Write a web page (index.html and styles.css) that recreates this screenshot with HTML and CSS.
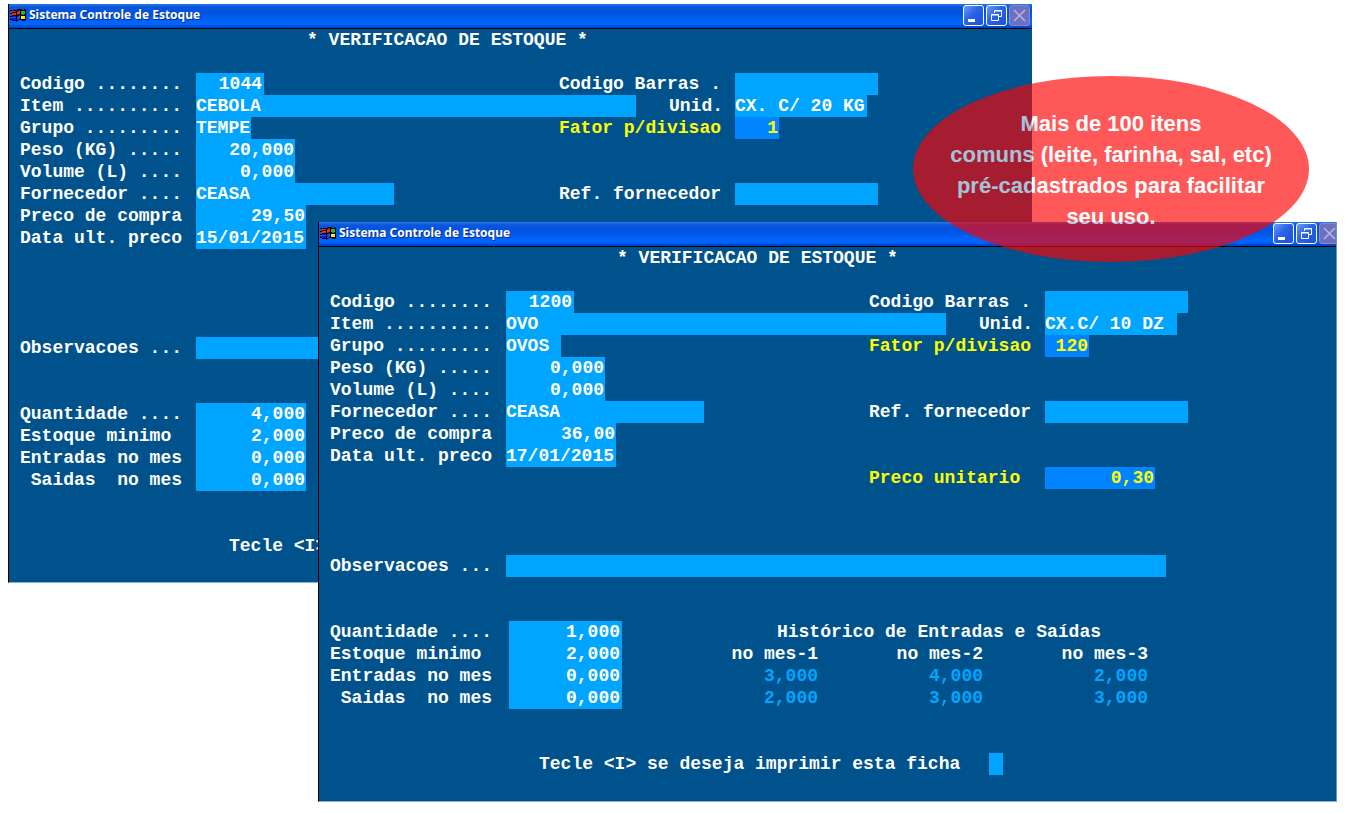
FILE: index.html
```html
<!DOCTYPE html>
<html lang="pt-BR">
<head>
<meta charset="utf-8">
<title>Sistema Controle de Estoque</title>
<link rel="stylesheet" href="styles.css">
</head>
<body>
<svg class="defs" aria-hidden="true">
  <symbol id="flag" viewBox="0 0 17 15">
    <path d="M7 3 9 1 12 1 14 2 17 1V12L15 13 12 12 10 12 7 14z" fill="#000"/>
    <path d="M1 2h2v1H1zM4 2h3v1H4zM1 5h2v1H1zM3 4h4v1H3zM1 8h2v1H1zM3 7h4v1H3zM1 11h2v1H1zM3 12h4v1H3z" fill="#000"/>
    <path d="M1 4h2v1H1zM3 3h4v1H3zM2 6h5v1H2zM3 5h4v1H3z" fill="#f02818"/>
    <path d="M1 10h2v1H1zM3 8h4v1H3zM3 10h4v2H3z" fill="#1018e0"/>
    <path d="M9 3 11 2V6L8 7V4z" fill="#f02818"/>
    <path d="M12 3 14 3 16 3V6L14 7 12 6z" fill="#20c020"/>
    <path d="M8 9 11 7V11L8 12z" fill="#2050ff"/>
    <path d="M12 8 14 8 16 8V11L14 11 12 11z" fill="#ffe820"/>
  </symbol>
  <symbol id="min" viewBox="0 0 21 21"><path d="M5 14h7v3H5z" fill="#fff"/></symbol>
  <symbol id="restore" viewBox="0 0 21 21">
    <path d="M8.500 8V5.500H15.500V11.500H13M8 6h8" fill="none" stroke="#fff"/>
    <path d="M5.500 9.500h7v6h-7zM5 10h8" fill="none" stroke="#fff"/>
  </symbol>
  <symbol id="close" viewBox="0 0 21 21"><path d="M5 5 16 16M16 5 5 16" fill="none" stroke="#b9b6dc" stroke-width="1.500"/></symbol>
</svg>
<main class="desktop">
  <section class="window window-back">
    <header class="titlebar">
      <svg class="app-icon"><use href="#flag"/></svg>
      <h2 class="caption">Sistema Controle de Estoque</h2>
      <button class="tb" aria-label="Minimizar"><svg><use href="#min"/></svg></button>
      <button class="tb" aria-label="Restaurar"><svg><use href="#restore"/></svg></button>
      <button class="tb tb-off" aria-label="Fechar" disabled><svg><use href="#close"/></svg></button>
    </header>
    <form class="screen">
      <h1 class="heading">* VERIFICACAO DE ESTOQUE *</h1>
      <div class="block">
        <div class="row"><label for="a1">Codigo ........</label><input id="a1" class="w6 num" value="1044"><label for="a2">Codigo Barras .</label><input id="a2" class="w13"></div>
        <div class="row"><label for="a3">Item ..........</label><input id="a3" class="w40" value="CEBOLA"><label for="a4" class="end">Unid.</label><input id="a4" class="w12" value="CX. C/ 20 KG"></div>
        <div class="row"><label for="a5">Grupo .........</label><input id="a5" class="w5" value="TEMPE"><label for="a6" class="calc">Fator p/divisao</label><input id="a6" class="w4 num calc" value="1"></div>
        <div class="row"><label for="a7">Peso (KG) .....</label><input id="a7" class="w9 num" value="20,000"></div>
        <div class="row"><label for="a8">Volume (L) ....</label><input id="a8" class="w9 num" value="0,000"></div>
        <div class="row"><label for="a9">Fornecedor ....</label><input id="a9" class="w18" value="CEASA"><label for="a10">Ref. fornecedor</label><input id="a10" class="w13"></div>
        <div class="row"><label for="a11">Preco de compra</label><input id="a11" class="w10 num" value="29,50"></div>
        <div class="row"><label for="a12">Data ult. preco</label><input id="a12" class="w10" value="15/01/2015"></div>
        <div class="row"></div>
      </div>
      <div class="block notes">
        <div class="row"><label for="a13">Observacoes ...</label><input id="a13" class="w60"></div>
      </div>
      <div class="block stock">
        <div>
          <div class="row"><label for="a14">Quantidade ....</label><input id="a14" class="w10 num" value="4,000"></div>
          <div class="row"><label for="a15">Estoque minimo</label><input id="a15" class="w10 num" value="2,000"></div>
          <div class="row"><label for="a16">Entradas no mes</label><input id="a16" class="w10 num" value="0,000"></div>
          <div class="row"><label for="a17"> Saidas  no mes</label><input id="a17" class="w10 num" value="0,000"></div>
        </div>
      </div>
      <div class="prompt"><label for="a18">Tecle &lt;I&gt;</label><input id="a18" class="cursor"></div>
    </form>
  </section>

  <section class="window window-front">
    <header class="titlebar">
      <svg class="app-icon"><use href="#flag"/></svg>
      <h2 class="caption">Sistema Controle de Estoque</h2>
      <button class="tb" aria-label="Minimizar"><svg><use href="#min"/></svg></button>
      <button class="tb" aria-label="Restaurar"><svg><use href="#restore"/></svg></button>
      <button class="tb tb-off" aria-label="Fechar" disabled><svg><use href="#close"/></svg></button>
    </header>
    <form class="screen">
      <h1 class="heading">* VERIFICACAO DE ESTOQUE *</h1>
      <div class="block">
        <div class="row"><label for="b1">Codigo ........</label><input id="b1" class="w6 num" value="1200"><label for="b2">Codigo Barras .</label><input id="b2" class="w13"></div>
        <div class="row"><label for="b3">Item ..........</label><input id="b3" class="w40" value="OVO"><label for="b4" class="end">Unid.</label><input id="b4" class="w12" value="CX.C/ 10 DZ"></div>
        <div class="row"><label for="b5">Grupo .........</label><input id="b5" class="w5" value="OVOS"><label for="b6" class="calc">Fator p/divisao</label><input id="b6" class="w4 num calc" value="120"></div>
        <div class="row"><label for="b7">Peso (KG) .....</label><input id="b7" class="w9 num" value="0,000"></div>
        <div class="row"><label for="b8">Volume (L) ....</label><input id="b8" class="w9 num" value="0,000"></div>
        <div class="row"><label for="b9">Fornecedor ....</label><input id="b9" class="w18" value="CEASA"><label for="b10">Ref. fornecedor</label><input id="b10" class="w13"></div>
        <div class="row"><label for="b11">Preco de compra</label><input id="b11" class="w10 num" value="36,00"></div>
        <div class="row"><label for="b12">Data ult. preco</label><input id="b12" class="w10" value="17/01/2015"></div>
        <div class="row"><span></span><span></span><label for="b13" class="calc">Preco unitario</label><input id="b13" class="w10 num calc" value="0,30"></div>
      </div>
      <div class="block notes">
        <div class="row"><label for="b14">Observacoes ...</label><input id="b14" class="w60"></div>
      </div>
      <div class="block stock stock-wide">
        <div>
          <div class="row"><label for="b15">Quantidade ....</label><input id="b15" class="w10 num" value="1,000"></div>
          <div class="row"><label for="b16">Estoque minimo</label><input id="b16" class="w10 num" value="2,000"></div>
          <div class="row"><label for="b17">Entradas no mes</label><input id="b17" class="w10 num" value="0,000"></div>
          <div class="row"><label for="b18"> Saidas  no mes</label><input id="b18" class="w10 num" value="0,000"></div>
        </div>
        <table class="history">
          <caption>Histórico de Entradas e Saídas</caption>
          <thead><tr><th>no mes-1</th><th>no mes-2</th><th>no mes-3</th></tr></thead>
          <tbody>
            <tr><td>3,000</td><td>4,000</td><td>2,000</td></tr>
            <tr><td>2,000</td><td>3,000</td><td>3,000</td></tr>
          </tbody>
        </table>
      </div>
      <div class="prompt"><label for="b19">Tecle &lt;I&gt; se deseja imprimir esta ficha</label><input id="b19" class="cursor"></div>
    </form>
  </section>

  <p class="callout">Mais de 100 itens<br>comuns (leite, farinha, sal, etc)<br>pré-cadastrados para facilitar<br>seu uso.</p>
</main>
</body>
</html>
```
FILE: styles.css
```css
* { box-sizing: border-box; }
body { margin: 0; background: #fff; }
.defs { position: absolute; width: 0; height: 0; }
.desktop { position: relative; min-width: 1350px; min-height: 100vh; overflow: hidden; }

/* windows placed freely on the desktop */
.window { position: absolute; overflow: hidden; background: #00528c; border-left: 1px solid #000; border-bottom: 1px solid #8fb0c8; }
.window-back { left: 8px; right: 318px; top: 4px; }
.window-front { left: 318px; right: 13px; top: 222px; border-right: 1px solid #6f9abc; }

.titlebar {
  display: flex; align-items: center; gap: 2px; height: 25px; padding: 0 2px 2px 0;
  border-bottom: 1px solid #000;
  background: linear-gradient(#2a7be4 0, #0a55dd 3px, #0053e1 9px, #005ff5 15px, #0066ff 20px, #0040c0 24px);
}
/* the front window's right edge cuts through its last button */
.window-front .titlebar { margin-right: -6px; }
.app-icon { width: 17px; height: 15px; margin-right: 1px; }
.caption {
  flex: 1; margin: 0; color: #fff; font: bold 12px/22px "Noto Sans", "Open Sans", sans-serif;
  text-shadow: 1px 1px 0 #0a2a80; white-space: nowrap;
}
.tb {
  width: 21px; height: 21px; padding: 0; overflow: hidden; border: 1px solid #fff; border-radius: 3px;
  background: linear-gradient(135deg, #6a9cf8, #2a62e8 45%, #1c50d8);
}
.tb svg { display: block; width: 21px; height: 21px; margin: -1px; }
.tb-off { border-color: #8a86c8; background: #6d6fc0; }

/* text-mode screen: cells of 11 x 22 */
.screen { padding: 0 0 25px 11px; color: #fff; font: bold 18px/22px "Liberation Mono", monospace; }
.screen label { display: block; white-space: pre; }
.heading { margin: 0 0 22px; padding-left: 287px; font: inherit; }
.row { display: grid; grid-template-columns: 176px 363px 176px 1fr; height: 22px; }
.screen input {
  height: 22px; margin: 0; padding: 0; border: 0; border-radius: 0; outline: 0;
  background: #00a5ff; color: #fff; font: inherit;
}
.screen .num { padding-right: 1px; text-align: right; }
.screen .calc { color: #ff0; }
.screen input.calc { background: #0084ff; }
.end { padding-right: 12px; text-align: right; }
.w4 { width: 44px; }
.w5 { width: 55px; }
.screen .w6 { width: 68px; padding-right: 2px; }
.w9 { width: 99px; }
.w10 { width: 110px; }
.w12 { width: 132px; }
.w13 { width: 143px; }
.w18 { width: 198px; }
.w40 { width: 440px; }
.w60 { width: 660px; }
.notes { margin-top: 66px; }
.stock { display: flex; margin-top: 44px; }
.stock .row { grid-template-columns: 176px auto; }
.stock-wide { gap: 108px; }
.stock-wide .row { grid-template-columns: 179px auto; }
.screen .stock-wide .w10 { width: 113px; padding-right: 2px; }

.history { border-collapse: collapse; table-layout: fixed; width: 418px; white-space: nowrap; font: inherit; }
.history th, .history td { padding: 0; text-align: right; font: inherit; width: 165px; }
.history th:first-child { width: 88px; }
.history td { color: #00a5ff; }

.prompt { display: flex; margin-top: 44px; padding-left: 209px; }
.prompt label { min-width: 450px; }
.screen .cursor { width: 14px; }
.window-front .screen { padding-bottom: 26px; }

.callout {
  position: absolute; right: 41px; top: 76px; width: 396px; height: 186px; margin: 0; padding: 32px 0 0;
  border-radius: 50%; background: #f00; opacity: .65; color: #fff; text-align: center;
  font: bold 22px/31px "Liberation Sans", sans-serif;
}
```
